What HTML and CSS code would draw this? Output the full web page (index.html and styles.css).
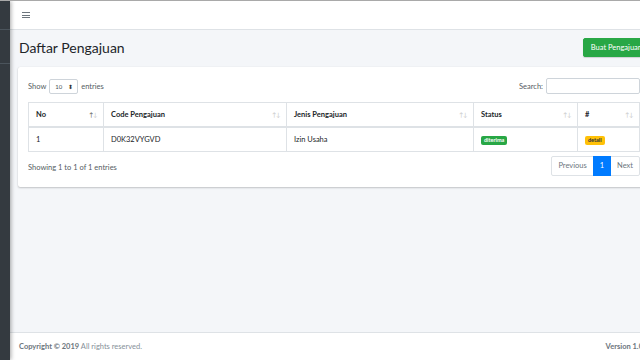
FILE: index.html
```html
<!DOCTYPE html>
<html>
<head>
<meta charset="utf-8">
<link rel="stylesheet" href="styles.css">
</head>
<body>
<div class="wrapper">
  <aside class="sidebar">
    <div class="sb-brand"></div>
    <div class="sb-user"></div>
  </aside>
  <div class="main">
    <nav class="navbar">
      <span class="hamburger"><i></i><i></i><i></i></span>
    </nav>
    <div class="content">
      <div class="content-header">
        <h1>Daftar Pengajuan</h1>
        <a class="btn-success">Buat Pengajuan</a>
      </div>
      <div class="card">
        <div class="dt-top">
          <label class="dt-length">Show <span class="select">10 <span class="spin">&#x2B0D;</span></span> entries</label>
          <label class="dt-search">Search: <span class="input"></span></label>
        </div>
        <table class="table">
          <colgroup>
            <col class="c-no"><col class="c-code"><col class="c-jenis"><col class="c-status"><col class="c-act">
          </colgroup>
          <thead>
            <tr>
              <th>No<span class="sort"><b>&#8593;</b><i>&#8595;</i></span></th>
              <th>Code Pengajuan<span class="sort"><i>&#8593;</i><i>&#8595;</i></span></th>
              <th>Jenis Pengajuan<span class="sort"><i>&#8593;</i><i>&#8595;</i></span></th>
              <th>Status<span class="sort"><i>&#8593;</i><i>&#8595;</i></span></th>
              <th>#<span class="sort"><i>&#8593;</i><i>&#8595;</i></span></th>
            </tr>
          </thead>
          <tbody>
            <tr>
              <td>1</td>
              <td>D0K32VYGVD</td>
              <td>Izin Usaha</td>
              <td><span class="badge badge-success">diterima</span></td>
              <td><span class="badge badge-warning">detail</span></td>
            </tr>
          </tbody>
        </table>
        <div class="dt-bottom">
          <div class="dt-info">Showing 1 to 1 of 1 entries</div>
          <ul class="pagination">
            <li class="disabled">Previous</li>
            <li class="active">1</li>
            <li class="disabled">Next</li>
          </ul>
        </div>
      </div>
    </div>
    <footer class="footer">
      <div><strong>Copyright &copy; 2019</strong> All rights reserved.</div>
      <div class="version"><b>Version 1.0</b></div>
    </footer>
  </div>
</div>
</body>
</html>
```

FILE: styles.css
```css
html, body {
  margin: 0;
  padding: 0;
  width: 640px;
  height: 360px;
  overflow: hidden;
}
body {
  font-family: "Source Sans Pro", Lato, "Liberation Sans", sans-serif;
  font-size: 7.5px;
  color: #212529;
  border-top: 1px solid #a9a9a9;
  box-sizing: border-box;
}
.wrapper {
  display: flex;
  width: 658px;
  height: 359px;
}
.sidebar {
  width: 10px;
  flex: none;
  background: #343a40;
  box-shadow: 1px 0 4px rgba(0,0,0,0.35);
  position: relative;
  z-index: 2;
}
.sb-brand {
  height: 28px;
  border-bottom: 1px solid #4b545c;
}
.sb-user {
  height: 33px;
  border-bottom: 1px solid #4b545c;
}
.main {
  flex: 1;
  display: flex;
  flex-direction: column;
  background: #f4f6f9;
}
.navbar {
  height: 28px;
  background: #fff;
  border-bottom: 1px solid #dee2e6;
  display: flex;
  align-items: center;
  padding-left: 12px;
}
.hamburger {
  display: flex;
  flex-direction: column;
  gap: 1.5px;
  width: 8px;
}
.hamburger i {
  display: block;
  height: 1px;
  background: #6c757d;
}
.content {
  flex: 1;
  padding: 0 8px;
}
.content-header {
  display: flex;
  justify-content: space-between;
  align-items: flex-start;
  padding: 8px 0 0 1px;
  height: 29px;
}
.content-header h1 {
  margin: 0;
  font-size: 14px;
  font-weight: 400;
  line-height: 19px;
  color: #212529;
}
.btn-success {
  display: inline-block;
  background: #28a745;
  border: 1px solid #28a745;
  color: #fff;
  font-size: 7.5px;
  line-height: 17px;
  padding: 0 7px;
  border-radius: 2px;
  box-shadow: 0 1px 1px rgba(0,0,0,0.15);
}
.card {
  background: #fff;
  border-radius: 2px;
  box-shadow: 0 0 1px rgba(0,0,0,0.13), 0 1px 2px rgba(0,0,0,0.2);
  padding: 11px 10px 11px 10px;
}
.dt-top {
  display: flex;
  justify-content: space-between;
  align-items: center;
  height: 16px;
}
.dt-length, .dt-search {
  display: flex;
  align-items: center;
  gap: 3px;
  color: #555c63;
}
.select {
  display: inline-flex;
  align-items: center;
  justify-content: space-between;
  box-sizing: border-box;
  width: 29px;
  height: 15px;
  border: 1px solid #ced4da;
  border-radius: 2px;
  padding: 0 4px 0 5px;
  font-size: 6px;
  color: #495057;
}
.spin {
  font-size: 6px;
  color: #333;
}
.input {
  display: inline-block;
  box-sizing: border-box;
  width: 94px;
  height: 16px;
  border: 1px solid #ced4da;
  border-radius: 2px;
}
.table {
  width: 100%;
  table-layout: fixed;
  margin-top: 8px;
  border-collapse: collapse;
  border: 1px solid #dee2e6;
}
.c-no { width: 75px; }
.c-code { width: 183px; }
.c-jenis { width: 187px; }
.c-status { width: 104px; }
.table th, .table td {
  border: 1px solid #dee2e6;
  text-align: left;
  padding: 0 7px;
}
.table th {
  height: 23px;
  font-weight: 700;
  border-bottom-width: 2px;
  position: relative;
}
.table td {
  height: 23px;
}
.sort {
  position: absolute;
  right: 6px;
  top: 8px;
  font-size: 6px;
  line-height: 7px;
  font-weight: 400;
  color: #c8c8c8;
  letter-spacing: -0.5px;
}
.sort i { font-style: normal; }
.sort b { font-weight: 400; color: #555; }
.badge {
  display: inline-block;
  font-size: 5.5px;
  font-weight: 700;
  line-height: 9px;
  padding: 0 3px;
  border-radius: 2px;
}
.badge-success { background: #28a745; color: #fff; }
.badge-warning { background: #ffc107; color: #1f2d3d; }
.dt-bottom {
  display: flex;
  justify-content: space-between;
  align-items: center;
  margin-top: 4px;
}
.dt-info {
  color: #555c63;
  padding-top: 3px;
}
.pagination {
  display: flex;
  list-style: none;
  margin: 0;
  padding: 0;
}
.pagination li {
  box-sizing: border-box;
  height: 20px;
  line-height: 18px;
  border: 1px solid #dee2e6;
  margin-left: -1px;
  padding: 0 6px;
  color: #6c757d;
  background: #fff;
}
.pagination li:first-child { border-radius: 2px 0 0 2px; }
.pagination li:last-child { border-radius: 0 2px 2px 0; }
.pagination li.active {
  background: #007bff;
  border-color: #007bff;
  color: #fff;
  position: relative;
}
.footer {
  height: 27px;
  background: #fff;
  border-top: 1px solid #dee2e6;
  display: flex;
  justify-content: space-between;
  align-items: center;
  padding: 0 15px 0 9px;
  color: #869099;
}
.footer strong { color: #6c757d; }
.version b { color: #6c757d; }
```
